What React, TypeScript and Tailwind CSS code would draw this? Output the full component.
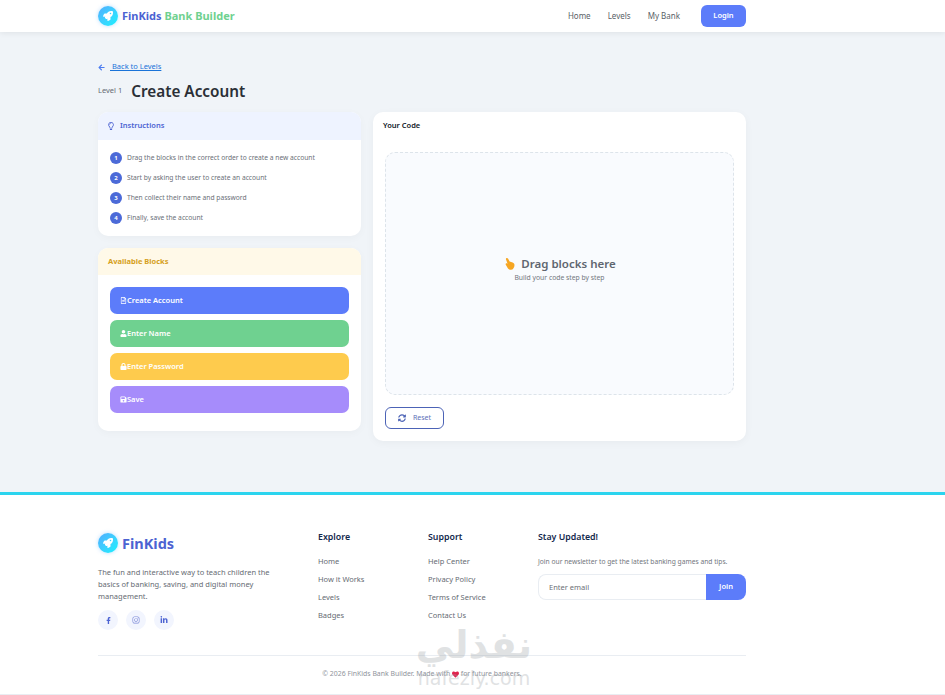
import { FaRocket, FaRegLightbulb, FaRegFileAlt, FaUser, FaLock, FaSave, FaSyncAlt, FaFacebookF, FaInstagram, FaLinkedinIn, FaArrowLeft, FaHeart } from "react-icons/fa";

function Logo() {
  return (
    <div className="flex h-5 w-5 items-center justify-center rounded-full bg-gradient-to-br from-[#4facfe] to-[#00f2fe] shadow-[0_0_4px_rgba(79,172,254,0.4)]">
      <FaRocket className="text-white" size={10} />
    </div>
  );
}

const steps = [
  "Drag the blocks in the correct order to create a new account",
  "Start by asking the user to create an account",
  "Then collect their name and password",
  "Finally, save the account",
];

const blocks = [
  { label: "Create Account", cls: "bg-[#5c7cfa]", Icon: FaRegFileAlt },
  { label: "Enter Name", cls: "bg-[#6fd190]", Icon: FaUser },
  { label: "Enter Password", cls: "bg-[#fecb4d]", Icon: FaLock },
  { label: "Save", cls: "bg-[#a68cfb]", Icon: FaSave },
];

function FooterCol({ title, items }: { title: string; items: string[] }) {
  return (
    <div className="w-[110px]">
      <h4 className="mb-[12px] text-[8.8px] leading-[12px] font-semibold text-[#12284c]">{title}</h4>
      <ul className="flex flex-col gap-[6px]">
        {items.map((i) => (
          <li key={i} className="text-[7.5px] leading-[12px] text-[#666b73]">{i}</li>
        ))}
      </ul>
    </div>
  );
}

export default function App() {
  return (
    <div className="relative h-[695px] overflow-hidden bg-[#f0f4f8] font-['Noto_Sans',sans-serif]">
      <nav className="flex h-8 items-center bg-white pl-[98px] shadow-[0_1px_6px_rgba(0,0,0,0.08)]">
        <div className="flex w-[648px] items-center justify-between">
          <div className="flex items-center gap-1">
            <Logo />
            <span className="text-[11px] leading-[14px] font-bold">
              <span className="text-[#4c63d2]">FinKids</span> <span className="text-[#6fd190]">Bank Builder</span>
            </span>
          </div>
          <div className="flex items-center">
            <span className="mr-[17px] text-[8px] text-[#5a5f67]">Home</span>
            <span className="mr-[17px] text-[8px] text-[#5a5f67]">Levels</span>
            <span className="mr-[21px] text-[8px] text-[#5a5f67]">My Bank</span>
            <span className="flex h-[22px] w-[45px] items-center justify-center rounded-[6px] bg-[#5c7cfa] text-[7.5px] font-semibold text-white">Login</span>
          </div>
        </div>
      </nav>

      <main className="ml-[98px] h-[460px] w-[648px] pt-[29px]">
        <a className="flex h-3 items-center gap-[5px] text-[7.5px] text-[#1a73d8]">
          <FaArrowLeft size={7} className="text-[#4c7cf0]" />
          <span className="underline">&nbsp;Back to Levels</span>
        </a>
        <div className="mt-[6px] flex h-[24px] items-center gap-[9px]">
          <span className="text-[7.5px] text-[#666b73]">Level 1</span>
          <h1 className="text-[15.3px] leading-[20px] font-semibold text-[#2a2f36]">Create Account</h1>
        </div>
        <div className="mt-[9px] flex items-start gap-3">
          <div className="flex w-[263px] flex-col gap-3">
            <section className="h-[124px] overflow-hidden rounded-[10px] bg-white shadow-[0_2px_8px_rgba(0,0,0,0.03)]">
              <div className="flex h-7 items-center gap-[5px] bg-[#eef3ff] pl-[9px] text-[7.5px] font-semibold text-[#4c63d2]">
                <FaRegLightbulb size={8} className="text-[#4c63d2]" />
                Instructions
              </div>
              <ol className="flex flex-col gap-2 px-3 pt-[12px]">
                {steps.map((s, i) => (
                  <li key={s} className="flex h-3 items-center gap-[5px] text-[6.7px] text-[#6a6f77]">
                    <span className="flex h-3 w-3 items-center justify-center rounded-full bg-[#4c6ad8] text-[6px] font-bold text-white">{i + 1}</span>
                    {s}
                  </li>
                ))}
              </ol>
            </section>
            <section className="h-[183px] overflow-hidden rounded-[10px] bg-white shadow-[0_2px_8px_rgba(0,0,0,0.03)]">
              <div className="flex h-[27px] items-center bg-[#fff9e8] pl-[10px] text-[7.5px] font-bold text-[#d6a01c]">Available Blocks</div>
              <div className="flex flex-col gap-[6px] px-3 pt-3">
                {blocks.map(({ label, cls, Icon }) => (
                  <div key={label} className={`flex h-[27px] items-center rounded-[7px] pl-[10px] text-[7.5px] font-semibold text-white ${cls}`}>
                    <Icon size={7} />
                    {label}
                  </div>
                ))}
              </div>
            </section>
          </div>
          <section className="h-[329px] w-[373px] rounded-[10px] bg-white px-3 shadow-[0_2px_8px_rgba(0,0,0,0.04)]">
            <h3 className="-ml-[2px] pt-[8px] text-[7.5px] leading-[10px] font-semibold text-[#111827]">Your Code</h3>
            <div className="mt-[22px] flex h-[243px] flex-col items-center justify-center rounded-[10px] border border-dashed border-[#dde4ea] bg-[#f9fbfe] pb-[8px]">
              <div className="flex items-center gap-[5px] text-[11.5px] leading-[16px] font-semibold text-[#5f6670]">
                <svg width="13" height="14" viewBox="0 0 13 14"><path d="M3.2 1.2c.7-.5 1.4-.2 1.8.4l1.6 2.9 3 .9c1.2.4 1.9 1.3 1.9 2.6 0 2.6-1.4 4.8-3.6 4.8-1.6 0-2.6-.7-3.4-2L2.8 7.8c-.4-.6-.1-1.3.5-1.5.5-.2 1 0 1.3.4L3 2.6c-.2-.5-.1-1 .2-1.4z" fill="#f6a623" /></svg>
                Drag blocks here
              </div>
              <p className="mt-[1px] text-[6.8px] leading-[10px] text-[#72767d]">Build your code step by step</p>
            </div>
            <button className="mt-3 flex h-[22px] w-[59px] items-center justify-center gap-[7px] rounded-[6px] border border-[#4c63b6] text-[7px] text-[#6070b8]">
              <FaSyncAlt size={8} className="text-[#4c63b6]" />
              Reset
            </button>
          </section>
        </div>
      </main>

      <footer className="h-[203px] border-t-[3px] border-b border-t-[#2bd4ee] border-b-[#e9edf2] bg-white">
        <div className="ml-[98px] w-[648px]">
          <div className="flex pt-[36px]">
            <div className="w-[220px]">
              <div className="mt-[2px] flex items-center gap-1">
                <Logo />
                <span className="text-[14.5px] leading-[16px] font-bold text-[#4c63d2]">FinKids</span>
              </div>
              <p className="mt-[13px] w-[180px] text-[7.5px] leading-[12px] text-[#666b73]">The fun and interactive way to teach children the basics of banking, saving, and digital money management.</p>
              <div className="mt-[8px] flex gap-[8px] text-[#4c63d2]">
                <span className="flex h-5 w-5 items-center justify-center rounded-full bg-[#f2f5fe]"><FaFacebookF size={7} /></span>
                <span className="flex h-5 w-5 items-center justify-center rounded-full bg-[#f2f5fe]"><FaInstagram size={8} className="text-[#7d8ad8]" /></span>
                <span className="flex h-5 w-5 items-center justify-center rounded-full bg-[#f2f5fe]"><FaLinkedinIn size={8} /></span>
              </div>
            </div>
            <FooterCol title="Explore" items={["Home", "How it Works", "Levels", "Badges"]} />
            <FooterCol title="Support" items={["Help Center", "Privacy Policy", "Terms of Service", "Contact Us"]} />
            <div className="w-[208px]">
              <h4 className="text-[8.8px] leading-[12px] font-semibold text-[#12284c]">Stay Updated!</h4>
              <p className="mt-[13px] text-[6.7px] leading-[12px] text-[#72767d]">Join our newsletter to get the latest banking games and tips.</p>
              <div className="mt-[6px] flex h-[26px]">
                <div className="flex flex-1 items-center rounded-l-[8px] border border-r-0 border-[#e9edf2] pt-[1px] pl-[10px] text-[7.5px] text-[#6b6f76]">Enter email</div>
                <div className="flex w-10 items-center justify-center rounded-r-[8px] bg-[#5c7cfa] text-[7.5px] font-semibold text-white">Join</div>
              </div>
            </div>
          </div>
          <div className="mt-[25px] border-t border-[#e9edf2] pt-[12px] text-center text-[6.9px] leading-[11px] text-[#8f949b]">
            © 2026 FinKids Bank Builder. Made with <FaHeart size={7} className="inline text-[#e0234e]" /> for future bankers.
          </div>
        </div>
      </footer>

      <div className="pointer-events-none absolute top-[623px] left-[416px] flex w-[116px] flex-col items-center opacity-30">
        <span className="font-['DejaVu_Sans',sans-serif] text-[38px] leading-[44px] font-bold text-[#9aa0a6]">نفذلي</span>
        <span className="font-['DejaVu_Sans',sans-serif] text-[19px] leading-[22px] text-[#9aa0a6]">nafezly.com</span>
      </div>
    </div>
  );
}
